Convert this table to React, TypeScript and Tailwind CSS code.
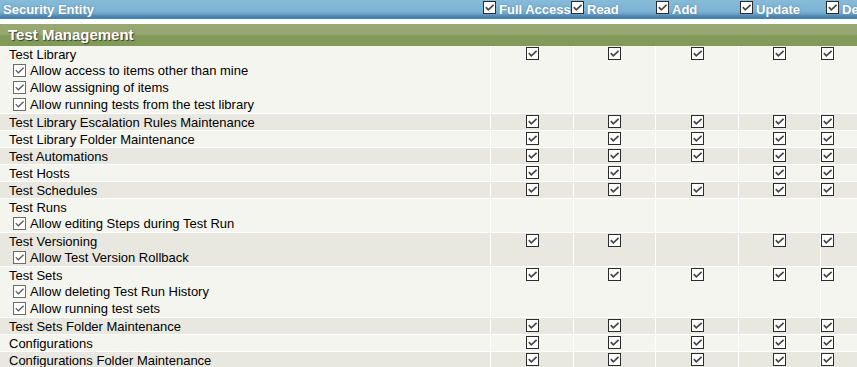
type Perm = [boolean, boolean, boolean, boolean, boolean];

interface Entity {
  name: string;
  subs?: string[];
  perms: Perm;
}

const ALL: Perm = [true, true, true, true, true];
const NONE: Perm = [false, false, false, false, false];

const entities: Entity[] = [
  {
    name: "Test Library",
    subs: [
      "Allow access to items other than mine",
      "Allow assigning of items",
      "Allow running tests from the test library",
    ],
    perms: ALL,
  },
  { name: "Test Library Escalation Rules Maintenance", perms: ALL },
  { name: "Test Library Folder Maintenance", perms: ALL },
  { name: "Test Automations", perms: ALL },
  { name: "Test Hosts", perms: [true, true, false, true, true] },
  { name: "Test Schedules", perms: ALL },
  { name: "Test Runs", subs: ["Allow editing Steps during Test Run"], perms: NONE },
  {
    name: "Test Versioning",
    subs: ["Allow Test Version Rollback"],
    perms: [true, true, false, true, true],
  },
  {
    name: "Test Sets",
    subs: ["Allow deleting Test Run History", "Allow running test sets"],
    perms: ALL,
  },
  { name: "Test Sets Folder Maintenance", perms: ALL },
  { name: "Configurations", perms: ALL },
  { name: "Configurations Folder Maintenance", perms: ALL },
];

const headers = [
  { label: "Full Access", w: "w-[88px]" },
  { label: "Read", w: "w-[85px]" },
  { label: "Add", w: "w-[84px]" },
  { label: "Update", w: "w-[86px]" },
  { label: "Delete", w: "flex-1" },
];

const colWidths = ["w-[83px]", "w-[82px]", "w-[83px]", "w-[82px]", "flex-1"];

function Check({ light }: { light?: boolean }) {
  return (
    <span
      className={
        "inline-flex h-[13px] w-[13px] shrink-0 items-center justify-center bg-white border " +
        (light ? "border-[#6b6b6b]" : "border-[#2b2b2b]")
      }
    >
      <svg width="11" height="11" viewBox="0 0 11 11">
        <path
          d="M1.8 5.2 L4.3 7.8 L9.6 2.8"
          fill="none"
          stroke={light ? "#555" : "#464646"}
          strokeWidth={light ? 1.2 : 1.7}
        />
      </svg>
    </span>
  );
}

export default function App() {
  return (
    <div className="w-[857px] h-[367px] overflow-hidden bg-white font-['Liberation_Sans',Arial,sans-serif] text-[13px] text-black">
      {/* column header bar */}
      <div className="flex h-[19px] items-start whitespace-nowrap bg-[linear-gradient(#86bbd9_0%,#7cb2d3_60%,#6a9fc4_75%,#4c84b0_85%,#4a80ab_100%)] text-white font-bold text-[13px] leading-[16px] [text-shadow:0_0_2px_#4d7fa5]">
        <div className="w-[483px] pl-[3px] pt-[2px]">Security Entity</div>
        {headers.map((h) => (
          <div key={h.label} className={"flex items-start gap-[3px] pt-px overflow-hidden " + h.w}>
            <Check />
            <span className="pt-px">{h.label}</span>
          </div>
        ))}
      </div>

      {/* group band */}
      <div className="mt-[5px] h-[22px] bg-[linear-gradient(#9aa873_0%,#96a66f_50%,#839b59_52%,#829a57_100%)] pl-[8px] text-[15px] font-bold leading-[21px] text-white [text-shadow:1px_1px_1px_#3b3b2e]">
        Test Management
      </div>

      {/* rows */}
      <div>
        {entities.map((e, i) => (
          <div
            key={e.name}
            className={
              "flex border-b border-white leading-[16px] " +
              (i % 2 === 0 ? "bg-[#f5f5ef]" : "bg-[#e9e8e0]")
            }
          >
            <div className="w-[490px] pl-[9px]">
              <div className="h-[16px] pt-px whitespace-nowrap">{e.name}</div>
              {e.subs?.map((s) => (
                <div key={s} className="flex h-[17px] items-center gap-[4px] pl-[4px] whitespace-nowrap">
                  <Check light />
                  <span>{s}</span>
                </div>
              ))}
            </div>
            {e.perms.map((p, j) => (
              <div
                key={j}
                className={
                  "flex border-l border-white pt-px " +
                  (j === 4 ? "justify-start " : "justify-center ") +
                  colWidths[j]
                }
              >
                {p && <Check />}
              </div>
            ))}
          </div>
        ))}
      </div>
    </div>
  );
}
